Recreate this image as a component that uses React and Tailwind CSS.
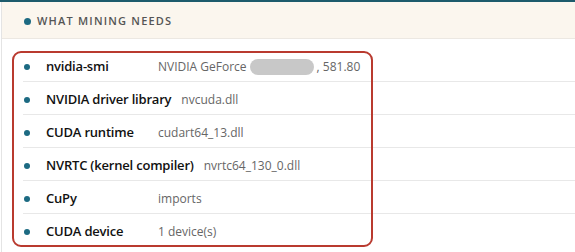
import React from "react";

const rows = [
  { label: "nvidia-smi", value: "gpu" },
  { label: "NVIDIA driver library", value: "nvcuda.dll" },
  { label: "CUDA runtime", value: "cudart64_13.dll" },
  { label: "NVRTC (kernel compiler)", value: "nvrtc64_130_0.dll" },
  { label: "CuPy", value: "imports" },
  { label: "CUDA device", value: "1 device(s)" },
];

export default function App() {
  return (
    <div
      className="w-[575px] h-[252px] bg-white overflow-hidden relative"
      style={{ fontFamily: '"Open Sans", "Noto Sans", sans-serif' }}
    >
      <div className="h-[2px] bg-[#1d5b6c]" />
      <div className="ml-px border-l border-[#e4e4e4] h-[250px]">
        <div className="h-[37px] bg-[#fbf6ee] border-b border-[#ece8e2] flex items-center pl-[22px] pt-[2px] gap-[6px]">
          <span className="w-[7px] h-[7px] rounded-full bg-[#1c6a82]" />
          <span className="text-[11px] font-semibold tracking-[1.2px] text-[#555] uppercase">
            What mining needs
          </span>
        </div>
        <div className="pt-[10px] pl-[21px]">
          {rows.map((r, i) => (
            <div
              key={r.label}
              className={
                "h-[33px] flex items-center pt-[3px] " +
                (i < rows.length - 1 ? "border-b border-[#e8e8e8]" : "")
              }
            >
              <span className="w-[6px] h-[6px] rounded-full bg-[#1c6a82] ml-px" />
              <span className="ml-[16px] min-w-[102px] text-[13px] font-semibold tracking-[-0.2px] text-[#111] whitespace-nowrap">
                {r.label}
              </span>
              <span className="ml-[10px] text-[12px] text-[#666] whitespace-nowrap flex items-center">
                {r.value === "gpu" ? (
                  <>
                    NVIDIA GeForce
                    <span className="inline-block w-[64px] h-[16px] rounded-full bg-[#c8c8c8] ml-[3px] mr-[3px]" />
                    , 581.80
                  </>
                ) : (
                  r.value
                )}
              </span>
            </div>
          ))}
        </div>
      </div>
      <div className="absolute left-[12px] top-[51px] w-[361px] h-[196px] border-2 border-[#b93a2f] rounded-[9px] pointer-events-none" />
    </div>
  );
}
